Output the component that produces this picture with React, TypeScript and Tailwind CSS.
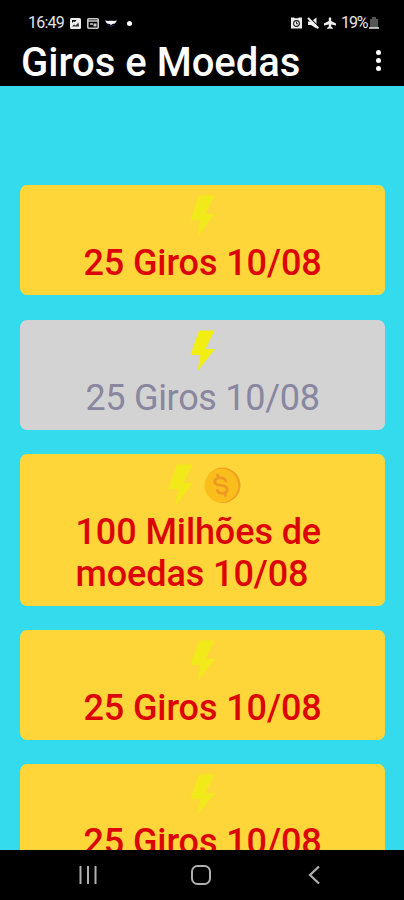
interface Reward {
  label: string;
  coin?: boolean;
  collected?: boolean;
}

const rewards: Reward[] = [
  { label: "25 Giros 10/08" },
  { label: "25 Giros 10/08", collected: true },
  { label: "100 Milhões de moedas 10/08", coin: true },
  { label: "25 Giros 10/08" },
  { label: "25 Giros 10/08" },
];

function Bolt() {
  return (
    <svg width="26" height="42" viewBox="0 0 26 42" fill="currentColor">
      <path d="M9 .5H24.5L15.5 19H25L7.5 41L10.5 25H.5Z" />
    </svg>
  );
}

function Coin() {
  return (
    <svg width="37" height="37" viewBox="0 0 37 37">
      <circle cx="18.8" cy="18.3" r="17.7" fill="#f0a025" />
      <circle cx="17.4" cy="18.6" r="16.9" fill="#f9bd1c" />
      <path
        d="M22 14C20.6 10.4 14.2 9.8 11.6 12.4C9.4 15.4 11.6 18 16 18.2C20.8 18.6 24.1 20.6 22.9 24C21.2 27.4 15.6 27.2 13.2 23.4M13.4 8L14.6 11M20.4 26.2L21.5 28.6"
        fill="none"
        stroke="#ee9922"
        strokeWidth="2.8"
        strokeLinecap="round"
      />
    </svg>
  );
}

function StatusBar() {
  return (
    <div className="flex h-[46px] items-center pl-7 pr-[25px] text-[16px] leading-none text-[#e4e4e4]">
      <span className="w-[42px] tracking-[-0.8px]">16:49</span>
      <svg className="mr-1.5" width="11" height="11" viewBox="0 0 11 11">
        <rect width="11" height="11" rx="1.5" fill="#eee" />
        <path d="M2 2H6.5L5 4L3.5 3.5L2 5Z" fill="#111" />
        <path d="M2 8.5L4 6.5L5.5 7.5L8.5 4.5L9 8.5Z" fill="#333" />
      </svg>
      <svg className="mr-1.5" width="12" height="11" viewBox="0 0 12 11">
        <rect x=".8" y=".8" width="10.4" height="9.4" rx="1" fill="none" stroke="#ccc" strokeWidth="1.6" />
        <path d="M1 3H11M3 6H6" stroke="#ccc" strokeWidth="1.5" />
        <rect x="6.5" y="5.5" width="3" height="3" fill="#ccc" />
      </svg>
      <svg className="mr-2.5" width="12" height="8" viewBox="0 0 12 8">
        <path d="M0 1.5L4 2L5 1.5L6 2L7 1.5L8 2L12 1.5L10 4.5L7.5 5L6 6L4.5 5L2 4.5Z" fill="#f4f4ff" />
        <path d="M3 6L6 7.2L9 6" fill="none" stroke="#252a66" />
      </svg>
      <span className="size-[5px] rounded-full bg-white" />

      <svg className="ml-auto mr-[5px]" width="11" height="12" viewBox="0 0 11 12">
        <path d="M0 .5H3L4 1.2H7L8 .5H11V11.5H0Z" fill="#eee" />
        <circle cx="5.5" cy="6.5" r="2.9" fill="#eee" stroke="#222" strokeWidth="1.1" />
        <path d="M5.5 4.8V6.8H7" fill="none" stroke="#222" />
      </svg>
      <svg className="mr-[5px]" width="12" height="12" viewBox="0 0 12 12">
        <path d="M1 4.5H4L9.5 .5V11.5L4 8H1Z" fill="#eee" />
        <path d="M2.4 .4L12 10" stroke="#000" strokeWidth="1.2" />
        <path d="M1 1L11.3 11.3" stroke="#eee" strokeWidth="2" />
      </svg>
      <svg className="mr-[5px]" width="12" height="12" viewBox="0 0 12 12">
        <path d="M4.8 1Q6 -.6 7.2 1V4L12 6.6V8.4L7.2 7.4V9.6L8.7 10.8V12L6 11.4L3.3 12V10.8L4.8 9.6V7.4L0 8.4V6.6L4.8 4Z" fill="#eee" />
      </svg>
      <span className="w-7 tracking-[-1.1px]">19%</span>
      <svg width="10" height="12" viewBox="0 0 10 12">
        <path d="M1 11V2H3V0H7V2H9V11Z" fill="#555" />
        <path d="M0 11H10" stroke="#ddd" strokeWidth="1.6" />
      </svg>
    </div>
  );
}

function RewardCard({ label, coin, collected }: Reward) {
  return (
    <div
      className={`flex shrink-0 flex-col items-center rounded-[7px] pb-[11px] pt-2.5 ${
        collected ? "bg-[#d3d3d3] text-[#f3ee12]" : "bg-[#ffd63a] text-[#f2e91b]"
      }`}
    >
      <div className={`flex h-[47px] gap-2.5 ${coin ? "pl-1" : ""}`}>
        <Bolt />
        {coin && (
          <div className="pt-[3px]">
            <Coin />
          </div>
        )}
      </div>
      <p
        className={`max-w-[254px] text-[36px] leading-[42px] ${
          collected
            ? "tracking-[-0.3px] text-[#8986a0]"
            : "font-medium tracking-[-0.1px] text-[#dc0505]"
        }`}
      >
        {label}
      </p>
    </div>
  );
}

export default function App() {
  return (
    <div className="flex h-[900px] w-[404px] flex-col overflow-hidden bg-black font-['Roboto',sans-serif]">
      <header className="h-[86px] shrink-0">
        <StatusBar />
        <div className="flex h-[34px] items-center justify-between pl-[21px] pr-[23px]">
          <h1 className="text-[40px] font-medium leading-none text-white">Giros e Moedas</h1>
          <div className="-mt-1.5 flex flex-col gap-[3px]">
            <span className="size-[5px] rounded-full bg-white" />
            <span className="size-[5px] rounded-full bg-white" />
            <span className="size-[5px] rounded-full bg-white" />
          </div>
        </div>
      </header>

      <main className="flex min-h-0 flex-1 flex-col gap-[24.3px] overflow-hidden bg-[#33dbed] pl-5 pr-[19px] pt-[99.3px]">
        {rewards.map((reward, i) => (
          <RewardCard key={i} {...reward} />
        ))}
      </main>

      <nav className="flex h-[50px] shrink-0 items-center pl-[79px]">
        <svg width="18" height="20" viewBox="0 0 18 20" stroke="#b0b0b0" strokeWidth="2">
          <path d="M1.5 1V19M9 1V19M16.5 1V19" />
        </svg>
        <svg className="ml-[94px]" width="20" height="20" viewBox="0 0 20 20" fill="none" stroke="#b0b0b0" strokeWidth="2">
          <rect x="1" y="1" width="18" height="18" rx="5.5" />
        </svg>
        <svg className="ml-[97px]" width="12" height="20" viewBox="0 0 12 20" fill="none" stroke="#b0b0b0" strokeWidth="2.2">
          <path d="M11 1.5L2 10L11 18.5" />
        </svg>
      </nav>
    </div>
  );
}
